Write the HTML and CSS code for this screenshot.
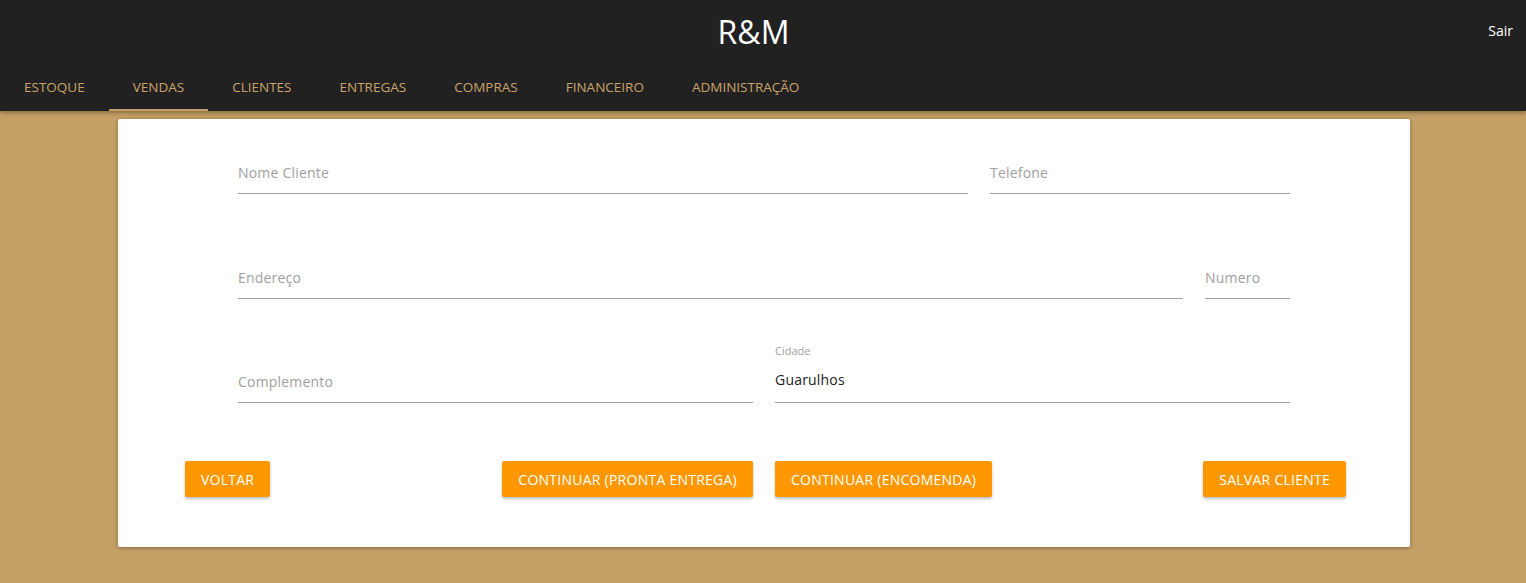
FILE: index.html
```html
<!DOCTYPE html>
<html lang="pt-BR">
<head>
<meta charset="utf-8">
<title>R&amp;M</title>
<link rel="stylesheet" href="styles.css">
</head>
<body>
<header class="appbar">
  <div class="titlebar">
    <div class="brand">R&amp;M</div>
    <a class="logout" href="#">Sair</a>
  </div>
  <nav class="tabs">
    <a class="tab" href="#">Estoque</a>
    <a class="tab active" href="#">Vendas</a>
    <a class="tab" href="#">Clientes</a>
    <a class="tab" href="#">Entregas</a>
    <a class="tab" href="#">Compras</a>
    <a class="tab" href="#">Financeiro</a>
    <a class="tab" href="#">Administração</a>
  </nav>
</header>
<main class="page">
  <section class="card">
    <div class="form">
      <div class="row row-a">
        <label class="field"><span class="flabel"></span><span class="fvalue placeholder">Nome Cliente</span></label>
        <label class="field"><span class="flabel"></span><span class="fvalue placeholder">Telefone</span></label>
      </div>
      <div class="row row-b">
        <label class="field"><span class="flabel"></span><span class="fvalue placeholder">Endereço</span></label>
        <label class="field"><span class="flabel"></span><span class="fvalue placeholder">Numero</span></label>
      </div>
      <div class="row row-c">
        <label class="field"><span class="flabel"></span><span class="fvalue placeholder">Complemento</span></label>
        <label class="field"><span class="flabel">Cidade</span><span class="fvalue">Guarulhos</span></label>
      </div>
    </div>
    <div class="actions">
      <div class="group">
        <button class="btn">Voltar</button>
        <button class="btn">Continuar (Pronta Entrega)</button>
      </div>
      <div class="group">
        <button class="btn">Continuar (Encomenda)</button>
        <button class="btn">Salvar Cliente</button>
      </div>
    </div>
  </section>
</main>
</body>
</html>
```
FILE: styles.css
```css
* { box-sizing: border-box; }
html, body { margin: 0; padding: 0; }
body {
  background: #c4a066;
  font-family: "Open Sans", "Noto Sans", sans-serif;
  min-height: 583px;
}
.appbar {
  background: #212121;
  height: 111px;
  display: flex;
  flex-direction: column;
  box-shadow: 0 2px 4px rgba(0,0,0,0.3);
}
.titlebar {
  height: 63px;
  display: flex;
  align-items: center;
  justify-content: center;
  padding-right: 19px;
  position: relative;
}
.brand {
  color: #ffffff;
  font-size: 32px;
  line-height: 40px;
  margin-top: 1px;
}
.logout {
  position: absolute;
  right: 13px;
  top: 21px;
  color: #ffffff;
  text-decoration: none;
  font-size: 14px;
  line-height: 20px;
}
.tabs {
  display: flex;
  height: 48px;
}
.tab {
  padding: 0 24px;
  display: flex;
  align-items: center;
  color: #cba36a;
  text-decoration: none;
  text-transform: uppercase;
  font-size: 13.5px;
  border-bottom: 2px solid transparent;
  padding-top: 2px;
}
.tab.active { border-bottom-color: #c4a066; }
.page {
  padding: 8px 116px 0 118px;
}
.card {
  background: #ffffff;
  padding: 16px 0 50px;
  box-shadow: 0 1px 4px rgba(0,0,0,0.35);
  border-radius: 2px;
}
.form {
  padding: 0 120px;
  display: flex;
  flex-direction: column;
  gap: 46px;
}
.row {
  display: grid;
  column-gap: 22px;
}
.row-a { grid-template-columns: 1fr 300px; }
.row-b { grid-template-columns: 1fr 85px; }
.row-c { grid-template-columns: 1fr 1fr; margin-top: -1px; }
.field {
  display: flex;
  flex-direction: column;
  border-bottom: 1px solid #9e9e9e;
  padding-bottom: 8px;
}
.flabel {
  height: 14px;
  font-size: 11px;
  line-height: 14px;
  color: #9e9e9e;
}
.fvalue {
  margin-top: 10px;
  padding-bottom: 2px;
  font-size: 14px;
  line-height: 24px;
  color: #212121;
  letter-spacing: 0.2px;
}
.fvalue.placeholder { color: #9e9e9e; margin-top: 12px; padding-bottom: 0; }
.actions {
  margin-top: 58px;
  padding: 0 64px 0 67px;
  display: grid;
  grid-template-columns: 568px 1fr;
  column-gap: 22px;
}
.group {
  display: flex;
  justify-content: space-between;
}
.btn {
  height: 36px;
  padding: 0 16px;
  border: none;
  border-radius: 2px;
  background: #ff9800;
  color: #ffffff;
  font-family: inherit;
  font-size: 14px;
  letter-spacing: 0.25px;
  text-transform: uppercase;
  box-shadow: 0 2px 3px rgba(0,0,0,0.25);
}
```
